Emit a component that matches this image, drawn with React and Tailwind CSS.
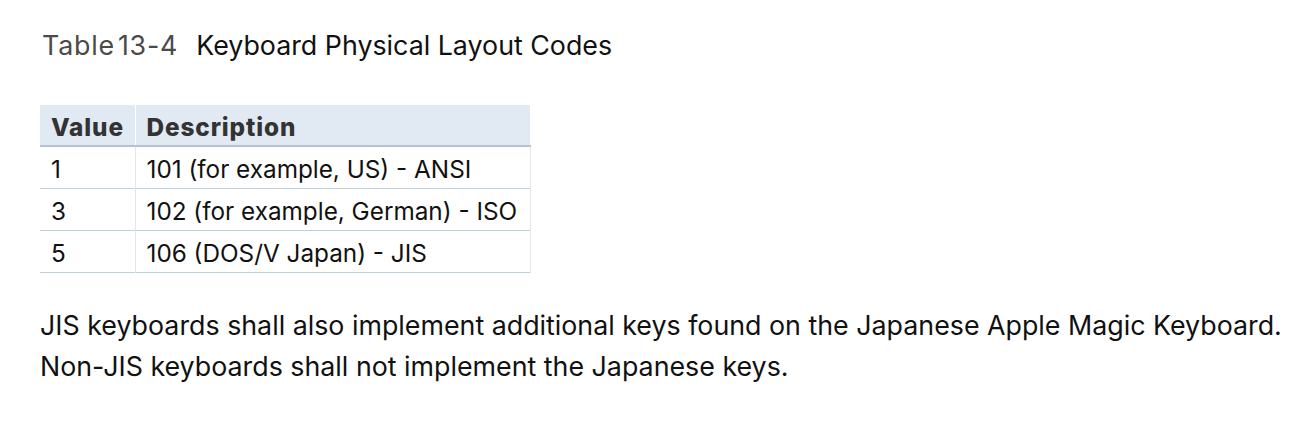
export default function App() {
  const rows = [
    ["1", "101 (for example, US) - ANSI"],
    ["3", "102 (for example, German) - ISO"],
    ["5", "106 (DOS/V Japan) - JIS"],
  ];
  return (
    <div className="w-[1292px] h-[422px] bg-white pl-[40px] pt-[27px]" style={{ fontFamily: "Inter, 'Liberation Sans', sans-serif" }}>
      <div className="flex items-baseline text-[26.8px] leading-[36px]">
        <span className="text-[#4a4a4a] ml-[2px] tracking-[0.8px]">Table</span>
        <span className="text-[#4a4a4a] ml-[3px] tracking-[0.8px]">13-4</span>
        <span className="ml-[18px] text-[#111]">Keyboard Physical Layout Codes</span>
      </div>
      <table className="mt-[42px] border-collapse text-[24.3px] text-[#111]">
        <thead>
          <tr className="bg-[#e1e9f2] border-b-2 border-[#b3c3d1]">
            <th className="text-left font-extrabold text-[#333] pl-[11px] pt-[4px] pr-0 h-[40px] w-[95px] border-r border-white tracking-[0.9px]">Value</th>
            <th className="text-left font-extrabold text-[#333] pl-[11px] pt-[4px] h-[40px] w-[395px] tracking-[0.9px]">Description</th>
          </tr>
        </thead>
        <tbody>
          {rows.map(([v, d]) => (
            <tr key={v} className="border-b border-[#bfd0dd]">
              <td className="pl-[11px] pt-[4px] h-[42px] border-r border-[#e6e6e6]">{v}</td>
              <td className="pl-[11px] pt-[4px] h-[42px] border-r border-[#e6e6e6]">{d}</td>
            </tr>
          ))}
        </tbody>
      </table>
      <p className="mt-[32px] text-[26.8px] leading-[41px] text-[#111]">
        JIS keyboards shall also implement additional keys found on the Japanese Apple Magic Keyboard.
        <br />
        Non-JIS keyboards shall not implement the Japanese keys.
      </p>
    </div>
  );
}
